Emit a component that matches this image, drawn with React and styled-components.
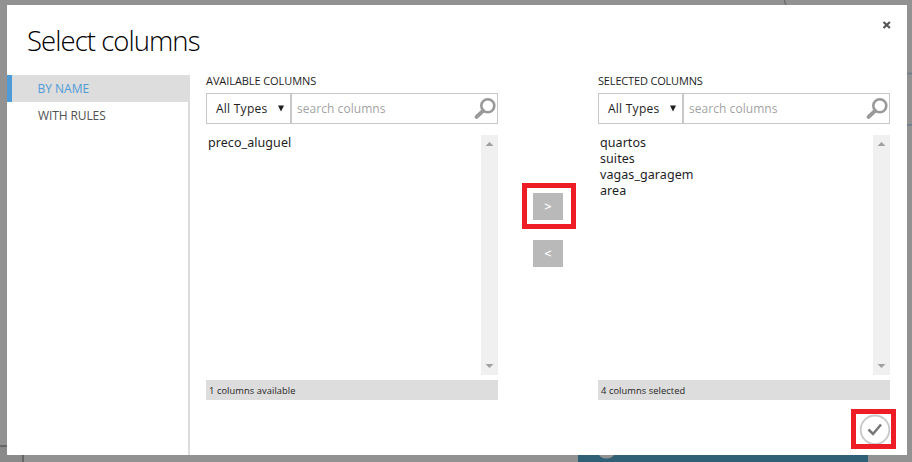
import React from "react";
import styled, { createGlobalStyle } from "styled-components";

const Global = createGlobalStyle`
  * { box-sizing: border-box; }
  body { margin: 0; overflow: hidden; font-family: "Open Sans", "Noto Sans", sans-serif; color: #1e1e1e; }
  button, input { font: inherit; border-radius: 0; margin: 0; }
`;

const Backdrop = styled.div`
  position: relative;
  width: 912px;
  height: 462px;
  padding: 5px 5px 7px 7px;
  background: #929292;
  overflow: hidden;
`;
const CanvasArt = styled.svg`
  position: absolute;
  inset: 0;
`;
const Dialog = styled.section`
  position: relative;
  width: 900px;
  height: 450px;
  background: #fff;
  display: flex;
  flex-direction: column;
`;
const Header = styled.header`
  display: flex;
  justify-content: space-between;
  height: 70px;
  padding: 15px 16px 0 20px;
`;
const Title = styled.h1`
  margin: 0;
  font-size: 27.5px;
  line-height: 42px;
  font-weight: 300;
  letter-spacing: -0.95px;
  color: #000;
  white-space: nowrap;
`;
const CloseButton = styled.button`
  width: 9px;
  height: 9px;
  padding: 0;
  border: 0;
  background: none;
  display: flex;
`;
const Body = styled.div`
  display: flex;
  flex: 1;
`;
const Sidebar = styled.nav`
  width: 183px;
  border-right: 2px solid #ddd;
`;
const Tab = styled.div`
  height: 27px;
  width: ${(p) => (p.$active ? "183px" : "181px")};
  padding-left: ${(p) => (p.$active ? "25.5px" : "31px")};
  border-left: ${(p) => (p.$active ? "5px solid #4f9bd8" : "0")};
  background: ${(p) => (p.$active ? "#ddd" : "transparent")};
  color: ${(p) => (p.$active ? "#4f9bd8" : "#505050")};
  font-size: 12px;
  line-height: 27px;
  letter-spacing: ${(p) => p.$spacing}px;
`;
const Content = styled.main`
  display: grid;
  grid-template-columns: 292px 100px 292px;
  margin-left: 16px;
`;
const Panel = styled.div`
  display: flex;
  flex-direction: column;
`;
const PanelTitle = styled.div`
  height: 18px;
  font-size: 11px;
  line-height: 12px;
  letter-spacing: ${(p) => p.$spacing}px;
  white-space: nowrap;
`;
const FilterRow = styled.div`
  display: flex;
  height: 31px;
  border: 1px solid #c8c8c8;
`;
const TypeSelect = styled.div`
  width: 85px;
  border-right: 2px solid #c8c8c8;
  padding: 0 6px 1px 9px;
  display: flex;
  align-items: center;
  justify-content: space-between;
  font-size: 12px;
  line-height: 27px;
  letter-spacing: 0.25px;
`;
const SearchField = styled.div`
  flex: 1;
  display: flex;
  padding-right: 1px;
`;
const SearchInput = styled.input`
  width: 180px;
  padding: 0 0 0 5px;
  border: 0;
  outline: 0;
  background: none;
  font-size: 12px;
  letter-spacing: 0.05px;
  &::placeholder { color: #a3a3a3; opacity: 1; }
`;
const List = styled.div`
  display: flex;
  justify-content: space-between;
  height: 240px;
  margin-top: 11px;
`;
const Items = styled.ul`
  list-style: none;
  margin: 0;
  padding: 0 0 0 2px;
  font-family: "Noto Sans", sans-serif;
  font-size: 12.5px;
  line-height: 16px;
`;
const Item = styled.li`
  letter-spacing: 0.07px;
`;
const Scrollbar = styled.div`
  width: 17px;
  padding: 7px 4px 7px;
  background: #f0f0f0;
  display: flex;
  flex-direction: column;
  justify-content: space-between;
`;
const Status = styled.div`
  height: 20px;
  margin-top: 5px;
  padding-left: 3px;
  background: #ddd;
  font-size: 9.3px;
  line-height: 21px;
  letter-spacing: 0.08px;
`;
const Transfer = styled.div`
  display: flex;
  flex-direction: column;
  align-items: flex-start;
  gap: 11px;
  padding: 108px 0 0 24px;
`;
const Highlight = styled.div`
  border: 5px solid #ee1c25;
  display: flex;
  overflow: hidden;
  width: ${(p) => p.$w}px;
  height: ${(p) => p.$h}px;
  padding: ${(p) => p.$pad};
`;
const MoveButton = styled.button`
  flex-shrink: 0;
  width: 30px;
  height: 27px;
  padding: 0;
  margin-left: ${(p) => p.$indent}px;
  border: 0;
  background: #b9b9b9;
  color: #fff;
  font-size: 13px;
  font-weight: 600;
  line-height: 27px;
`;
const Confirm = styled.div`
  position: absolute;
  left: 844px;
  top: 404px;
`;

function SearchIcon() {
  return (
    <svg width="24" height="29" viewBox="0 0 24 29" fill="none" stroke="#999">
      <circle cx="15.8" cy="11.7" r="6.5" strokeWidth="2.6" />
      <path d="m11 16.9-6.4 6" strokeWidth="4" strokeLinecap="round" />
    </svg>
  );
}

function ColumnPanel({ title, spacing, items, status }) {
  return (
    <Panel>
      <PanelTitle $spacing={spacing}>{title}</PanelTitle>
      <FilterRow>
        <TypeSelect>
          <span>All Types</span>
          <svg width="6" height="7" viewBox="0 0 6 7"><path d="M0 .5h6L3 6.5z" fill="#1e1e1e" /></svg>
        </TypeSelect>
        <SearchField>
          <SearchInput placeholder="search columns" />
          <SearchIcon />
        </SearchField>
      </FilterRow>
      <List>
        <Items>
          {items.map((name) => <Item key={name}>{name}</Item>)}
        </Items>
        <Scrollbar>
          <svg width="9" height="4" viewBox="0 0 9 4"><path d="M.5 4 4.5 0l4 4z" fill="#a0a0a0" /></svg>
          <svg width="9" height="4" viewBox="0 0 9 4"><path d="M.5 0 4.5 4l4-4z" fill="#a0a0a0" /></svg>
        </Scrollbar>
      </List>
      <Status>{status}</Status>
    </Panel>
  );
}

export default function App() {
  return (
    <>
      <Global />
      <Backdrop>
        <CanvasArt width="912" height="462" viewBox="0 0 912 462">
          <path d="M0 446h23v16H0z" fill="#8a8a8a" />
          <path d="M0 446h8M23 454v8" stroke="#666" strokeWidth="2" />
          <path d="M784.5 0q0 3 2 6" fill="none" stroke="#707070" strokeWidth="1.5" />
          <path d="M906 73.5h6M906 125h6" stroke="#74818c" strokeWidth="1.8" />
          <path d="M578 454h290v8H578z" fill="#306076" />
          <ellipse cx="606.5" cy="453" rx="8" ry="5.5" fill="#929292" />
        </CanvasArt>
        <Dialog>
          <Header>
            <Title>Select columns</Title>
            <CloseButton aria-label="Close">
              <svg width="9" height="9" viewBox="0 0 9 9"><path d="M1.5 2 7.9 8M7.9 2 1.5 8" stroke="#555" strokeWidth="2.2" /></svg>
            </CloseButton>
          </Header>
          <Body>
            <Sidebar>
              <Tab $active $spacing={0}>BY NAME</Tab>
              <Tab $spacing={-0.1}>WITH RULES</Tab>
            </Sidebar>
            <Content>
              <ColumnPanel
                title="AVAILABLE COLUMNS"
                spacing={-0.08}
                items={["preco_aluguel"]}
                status="1 columns available"
              />
              <Transfer>
                <Highlight $w={54} $h={46} $pad="5px 0 0 6px"><MoveButton $indent={0}>&gt;</MoveButton></Highlight>
                <MoveButton $indent={11}>&lt;</MoveButton>
              </Transfer>
              <ColumnPanel
                title="SELECTED COLUMNS"
                spacing={-0.17}
                items={["quartos", "suites", "vagas_garagem", "area"]}
                status="4 columns selected"
              />
            </Content>
          </Body>
          <Confirm>
            <Highlight $w={45} $h={40} $pad="0">
              <svg width="35" height="30" viewBox="0 0 35 30" fill="none">
                <circle cx="19" cy="15.8" r="14.3" stroke="#c8c8c8" strokeWidth="1.8" />
                <path d="m12.5 15.5 4.5 4.5 8-9.5" stroke="#777" strokeWidth="2.5" />
              </svg>
            </Highlight>
          </Confirm>
        </Dialog>
      </Backdrop>
    </>
  );
}
